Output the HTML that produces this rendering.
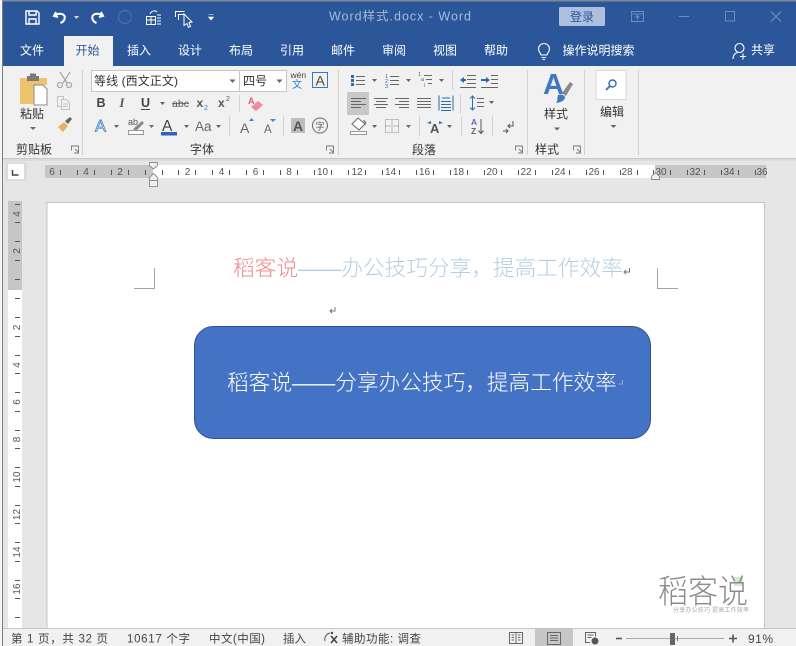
<!DOCTYPE html>
<html lang="zh">
<head>
<meta charset="utf-8">
<title>Word样式.docx - Word</title>
<style>
html,body{margin:0;padding:0;background:#e6e6e6;width:796px;height:646px;overflow:hidden}
svg{display:block;font-family:"Liberation Sans","Noto Sans CJK SC",sans-serif}
.t{font-size:12px;fill:#fff}
.r{font-size:12px;fill:#333}
.s{font-size:11.5px;fill:#444}
.n{font-size:10px;fill:#555}
.ic{fill:none;stroke:#555;stroke-width:1}
.w{fill:none;stroke:#fff;stroke-width:1.4}
.b{fill:#2b579a}
.ar{fill:#666}
.sep{stroke:#d2d2d2;stroke-width:1}
</style>
</head>
<body>
<svg width="796" height="646" viewBox="0 0 796 646" xmlns="http://www.w3.org/2000/svg">
<rect width="796" height="646" fill="#e6e6e6"/>
<!-- title + tab bar -->
<rect width="796" height="66" fill="#2b579a"/>
<rect width="796" height="1.5" fill="#7f8794"/>
<!-- QAT -->
<g class="w">
<path d="M26 11h11l2 2v11H26z"/><path d="M29 11v4h7v-4"/><path d="M29 24v-5h7v5"/>
<path d="M56 12l-2 4 4 1M54.500 16c3-3 8-3 10 0 1 3-1 6-4 7" stroke-width="2"/>
<path d="M101 12l2 4-4 1M102.500 16c-3-3-8-3-10 0-1 3 1 6 4 7" stroke-width="2"/>
</g>
<path d="M74 16h5l-2.500 3z" fill="#cdd7e6"/>
<circle cx="125" cy="17" r="6.500" fill="none" stroke="#4470ad" stroke-width="1.200"/>
<g fill="none" stroke="#fff" stroke-width="1">
<rect x="146.500" y="16.500" width="9" height="8"/><path d="M146.500 20h9M151 16.500v8M157 15h4M157 18h4M157 21h4M157 24h4M150 14c1-3 5-4 7-2"/>
<path d="M175.500 17v-5.500h9M178.500 20v-5.500h6"/>
</g>
<path d="M184 14l8 8-3 .5 1.500 4-2 .8-1.500-3.800-3 2z" fill="#2b579a" stroke="#fff" stroke-width="1"/>
<path d="M208.500 14.500h5M208.500 17h5l-2.500 3z" fill="#fff" stroke="#fff" stroke-width=".6"/>
<text x="329" y="20.500" font-size="12.500" fill="#a7bad7" textLength="142" lengthAdjust="spacing">Word样式.docx  -  Word</text>
<rect x="559" y="7" width="46" height="19" rx="1.500" fill="#adbfda"/>
<text x="570" y="21" font-size="12" fill="#2b579a">登录</text>
<g fill="none" stroke="#6d8dbb" stroke-width="1">
<path d="M631.500 11.500h12v10h-12zM631.500 14h12M637.500 20v-4M635.500 17.500l2-2 2 2"/>
<path d="M679 16.500h10"/>
<rect x="725.500" y="11.500" width="9" height="9.500"/>
<path d="M771 11.500l10 10M781 11.500l-10 10" stroke-width="1.200"/>
</g>
<!-- tabs -->
<rect x="64" y="36" width="49" height="30" fill="#f1f1f1"/>
<g class="t">
<text x="20" y="54.500">文件</text>
<text x="75.500" y="54.500" fill="#2b579a" style="fill:#2b579a">开始</text>
<text x="127" y="54.500">插入</text>
<text x="178" y="54.500">设计</text>
<text x="229" y="54.500">布局</text>
<text x="280" y="54.500">引用</text>
<text x="331" y="54.500">邮件</text>
<text x="382" y="54.500">审阅</text>
<text x="433" y="54.500">视图</text>
<text x="484" y="54.500">帮助</text>
<text x="562.500" y="54.500">操作说明搜索</text>
<text x="751" y="54">共享</text>
</g>
<g fill="none" stroke="#fff" stroke-width="1.100">
<path d="M541 55c0-2-2.500-3-2.500-6a5.500 5.500 0 0 1 11 0c0 3-2.500 4-2.500 6zM541.500 57.500h4.500M542.500 59.500h2.500"/>
<circle cx="739.500" cy="48" r="4.500"/><path d="M733 59c0-4 2.500-6.500 5-6.500M743 53.500v6M740 56.500h6"/>
</g>
<!-- ribbon -->
<rect y="66" width="796" height="92" fill="#f1f1f1"/>
<rect y="158" width="796" height="1" fill="#c8c8c8"/>
<rect y="159" width="796" height="2" fill="#dcdcdc"/>
<rect x="0" y="0" width="2" height="646" fill="#f5f5f5"/>
<rect x="2" y="0" width="1" height="646" fill="#7e7e7e"/>
<rect x="3" y="0" width="793" height="1.500" fill="#7f8794" opacity=".8"/>
<g class="sep">
<path d="M82.500 70v85M338.500 70v85M527.500 70v85M584.500 70v85M638.500 70v85"/>
<path d="M239.500 95v17M229.500 116v20M283.500 116v20M452.500 70v20M460.500 94v20M419.500 116v20M461.500 116v20M492.500 116v20"/>
</g>
<!-- clipboard -->
<path d="M20 78h27v7H40v19H20z" fill="#eec36d"/>
<path d="M27 76h12v5H27z" fill="#7a7a7a"/><path d="M30 73.500h6v3h-6z" fill="#7a7a7a"/>
<path d="M34 85h9l4 4v16H34z" fill="#fff" stroke="#8a8a8a"/>
<text x="20" y="118" class="r">粘贴</text>
<path d="M30 127h6l-3 3z" class="ar"/>
<g fill="none" stroke="#a9a9a9" stroke-width="1.300">
<path d="M60 72l7 11M70 72l-7 11"/><circle cx="60" cy="85" r="2.500"/><circle cx="69" cy="85" r="2.500"/>
</g>
<g fill="none" stroke="#c0c0c0"><path d="M57.500 96.500h6v3M57.500 96.500v10h3M61.500 99.500h5l3 3v7h-8zM63 104h5M63 106.500h5"/></g>
<path d="M58 127l6-5 4 4-5 6z" fill="#e5b45c"/><path d="M65 121l5-4 2 2-4 5z" fill="#666"/>
<text x="16" y="153.500" class="r">剪贴板</text>
<g fill="none" stroke="#777" stroke-width=".9">
<path d="M71.500 150.500v-4.500h7v7H74M75 149l3 3"/>
<path d="M326.500 150.500v-4.500h7v7H329M330 149l3 3"/>
<path d="M515.500 150.500v-4.500h7v7H518M519 149l3 3"/>
<path d="M573.500 150.500v-4.500h7v7H576M577 149l3 3"/>
</g>
<!-- font -->
<rect x="91.500" y="70.500" width="148" height="21" fill="#fff" stroke="#c6c6c6"/>
<rect x="239.500" y="70.500" width="47" height="21" fill="#fff" stroke="#c6c6c6"/>
<text x="94" y="85" class="r" textLength="84">等线 (西文正文)</text>
<text x="243" y="85" class="r">四号</text>
<path d="M229.500 79.500h6l-3 3.500zM276.500 79.500h6l-3 3.500z" class="ar"/>
<text x="290.500" y="78" font-size="8.500" fill="#444">wén</text>
<text x="292" y="88" font-size="10" fill="#2b7cd3">文</text>
<rect x="312.500" y="72.500" width="15" height="15" fill="none" stroke="#3b7bb5"/>
<text x="315.500" y="85.500" font-size="14" fill="#444">A</text>
<text x="96.500" y="107" font-size="12.500" font-weight="bold" fill="#444">B</text>
<text x="119.500" y="107" font-size="12.500" font-style="italic" font-weight="bold" fill="#555" font-family="Liberation Serif">I</text>
<text x="141" y="107" font-size="12.500" font-weight="bold" fill="#444">U</text>
<path d="M141 109.500h9" stroke="#444" stroke-width="1"/>
<path d="M160 102h5l-2.500 3z" class="ar"/>
<text x="172" y="107" font-size="10.500" fill="#555" textLength="17">abc</text>
<path d="M172 103.500h17" stroke="#555" stroke-width=".8"/>
<text x="196.500" y="107" font-size="12" font-weight="bold" fill="#555">x</text><text x="204" y="110" font-size="7" fill="#2b7cd3">2</text>
<text x="218" y="107" font-size="12" font-weight="bold" fill="#555">x</text><text x="226" y="101" font-size="7" fill="#555">2</text>
<text x="248" y="104" font-size="9" fill="#e05a7a" font-weight="bold">A</text>
<path d="M251 107l7-6 5 4-7 6z" fill="#f08a9c"/>
<text x="95" y="131.500" font-size="16.500" fill="#cfe2f6" stroke="#4a86c5" stroke-width=".8">A</text>
<path d="M114 125h5l-2.500 3zM149 125h5l-2.500 3zM184 125h5l-2.500 3zM216 125h5l-2.500 3z" class="ar"/>
<text x="128" y="125" font-size="9" fill="#555">ab</text>
<path d="M133 129l9-8 2 2-8 8z" fill="#8a8a8a"/>
<rect x="128.500" y="130.500" width="15" height="4" fill="#fff" stroke="#999"/>
<text x="162" y="131" font-size="15.500" fill="#444">A</text>
<rect x="161" y="132" width="16" height="3.500" fill="#2f63b8"/>
<text x="195" y="131" font-size="13.500" fill="#666">Aa</text>
<text x="240" y="133" font-size="14" fill="#666">A</text><path d="M249 121h5l-2.500-3z" fill="#4a86c5"/>
<text x="264" y="133" font-size="11.500" fill="#666">A</text><path d="M270 119h6l-3 3z" fill="#4a86c5"/>
<rect x="291" y="118" width="14" height="15" fill="#bdbdbd"/>
<text x="293" y="131" font-size="14" font-weight="bold" fill="#555">A</text>
<circle cx="320" cy="125.500" r="7.500" fill="none" stroke="#666"/>
<text x="315.500" y="129.500" font-size="9" fill="#555">字</text>
<text x="190" y="153.500" class="r">字体</text>
<!-- paragraph -->
<g fill="none" stroke="#666" stroke-width="1">
<path d="M356 76.500h9M356 80.500h9M356 84.500h9M390 76.500h9M390 80.500h9M390 84.500h9M424 75.500h8M426 79.500h6M428 83.500h4"/>
</g>
<g fill="#2b6cb0">
<rect x="351" y="75" width="3" height="3"/><rect x="351" y="79" width="3" height="3"/><rect x="351" y="83" width="3" height="3"/>
</g>
<g font-size="5.500" fill="#2b6cb0"><text x="385" y="78">1</text><text x="385" y="83">2</text><text x="385" y="88">3</text><text x="418" y="76">1</text><text x="421" y="81">a</text><text x="424" y="87">i</text></g>
<path d="M372 79h5l-2.500 3zM406 79h5l-2.500 3zM439 79h5l-2.500 3z" class="ar"/>
<g fill="none" stroke="#666"><path d="M467 75.500h9M467 79.500h9M467 83.500h9M460 87.500h16M491 75.500h7M491 79.500h7M491 83.500h7M481 87.500h17"/></g>
<path d="M460 80l4-3v2h2v2h-2v2zM490 80l-4-3v2h-5v2h5v2z" fill="#2b6cb0"/>
<rect x="347" y="92" width="22" height="23" fill="#c8c8c8"/>
<g fill="none" stroke="#666">
<path d="M351 98.500h15M351 101.500h10M351 104.500h15M351 107.500h10"/>
<path d="M374 98.500h14M376 101.500h10M374 104.500h14M376 107.500h10"/>
<path d="M395 98.500h14M399 101.500h10M395 104.500h14M399 107.500h10"/>
<path d="M417 98.500h14M417 101.500h14M417 104.500h14M417 107.500h14"/>
<path d="M439 95.500v15M453 95.500v15M441 101.500h10M441 104.500h10M441 107.500h10M441 110.500h10" stroke="#2b6cb0"/>
<path d="M477 98.500h7M477 102.500h7M477 106.500h7"/>
</g>
<path d="M442 98h8" stroke="#2b6cb0"/>
<path d="M472.500 96v14M470 98.500l2.500-2.500 2.500 2.500M470 107.500l2.500 2.500 2.500-2.500" fill="none" stroke="#2b6cb0"/>
<path d="M489 101h5l-2.500 3z" class="ar"/>
<path d="M352 124l6-6 7 6-6 6z" fill="#fff" stroke="#666"/><path d="M363 120c2 0 4 1 3 5l-1-.500z" fill="#888"/>
<rect x="350.500" y="131.500" width="16" height="3" fill="#fff" stroke="#999"/>
<path d="M372 125h5l-2.500 3zM406 125h5l-2.500 3zM447 125h5l-2.500 3z" class="ar"/>
<rect x="385.500" y="119.500" width="13" height="13" fill="none" stroke="#8a8a8a" stroke-dasharray="1 1"/>
<path d="M392 119.500v13M385.500 126h13" stroke="#8a8a8a" stroke-dasharray="1 1"/>
<text x="430" y="133" font-size="13" font-weight="bold" fill="#555">A</text>
<path d="M427 123l4-2v3zM443 123l-4-2v3z" fill="#2b6cb0"/>
<text x="471" y="125" font-size="8.500" fill="#7a5fc0" font-weight="bold">A</text>
<text x="471" y="134" font-size="8.500" fill="#666" font-weight="bold">Z</text>
<path d="M481 119v14M478.500 130.500l2.500 3 2.500-3" fill="none" stroke="#555"/>
<path d="M513 121v5h-5M510 124l-2 2 2 2M503 131h5M506 129l2 2-2 2" fill="none" stroke="#555"/>
<text x="412" y="154" class="r">段落</text>
<!-- styles -->
<text x="543" y="94" font-size="29" font-weight="bold" fill="#3f78bf">A</text>
<path d="M562 93l8-11 3 2-7 12z" fill="#8a8a8a"/><path d="M558 95c3-1 7 0 7 2.500s-4 5-9 5.500c2-2 1-5 2-8z" fill="#3f78bf"/>
<text x="544" y="118" class="r">样式</text>
<path d="M554 127.500h6l-3 3z" class="ar"/>
<text x="535" y="153.500" class="r">样式</text>
<!-- editing -->
<rect x="596" y="70.500" width="30" height="29" fill="#fff" stroke="#d8d8d8"/>
<circle cx="612.500" cy="83.500" r="3.500" fill="none" stroke="#2f6db5" stroke-width="1.400"/>
<path d="M610 86l-4 4" stroke="#2f6db5" stroke-width="1.800"/>
<text x="600" y="116" class="r">编辑</text>
<path d="M610.500 125h6l-3 3z" class="ar"/>
<!-- horizontal ruler -->
<rect x="5" y="162" width="22" height="19" fill="#dcdcdc"/>
<rect x="8" y="164" width="16" height="15" fill="#fff"/>
<path d="M12.500 170v5h6" fill="none" stroke="#444" stroke-width="1.500"/>
<rect x="45" y="165" width="721" height="13" fill="#c6c6c6"/>
<rect x="153" y="165" width="502" height="13" fill="#fff"/>
<path transform="translate(0 1)" stroke="#555" stroke-width="1" d="M60.500 169v5M77.500 169v5M94.500 169v5M111.500 169v5M128.500 169v5M145.500 169v5M162.500 169v5M178.500 169v5M195.500 169v5M212.500 169v5M229.500 169v5M246.500 169v5M263.500 169v5M280.500 169v5M297.500 169v5M314.500 169v5M331.500 169v5M348.500 169v5M365.500 169v5M382.500 169v5M399.500 169v5M416.500 169v5M433.500 169v5M450.500 169v5M467.500 169v5M484.500 169v5M501.500 169v5M518.500 169v5M535.500 169v5M552.500 169v5M569.500 169v5M586.500 169v5M603.500 169v5M620.500 169v5M637.500 169v5M653.500 169v5M670.500 169v5M687.500 169v5M704.500 169v5M721.500 169v5M738.500 169v5M755.500 169v5"/>
<g class="n" text-anchor="middle">
<text x="52" y="175">6</text><text x="86" y="175">4</text><text x="120" y="175">2</text>
<text x="187.500" y="175">2</text><text x="221.500" y="175">4</text><text x="255.500" y="175">6</text><text x="289" y="175">8</text>
<text x="322.500" y="175">10</text><text x="357" y="175">12</text><text x="390.500" y="175">14</text><text x="424.500" y="175">16</text><text x="458.500" y="175">18</text>
<text x="492" y="175">20</text><text x="526" y="175">22</text><text x="560" y="175">24</text><text x="594" y="175">26</text><text x="627" y="175">28</text>
<text x="661" y="175">30</text><text x="695" y="175">32</text><text x="729" y="175">34</text><text x="762" y="175">36</text>
</g>
<g fill="#f1f1f1" stroke="#8a8a8a" stroke-width=".9">
<path d="M149.500 162.500h8v3l-4 3.500-4-3.500z"/>
<path d="M153.500 173.500l4 4v3h-8v-3z"/>
<rect x="149.500" y="180.500" width="8" height="6"/>
<path d="M655.500 172.500l4 4v3h-8v-3z"/>
</g>
<!-- vertical ruler -->
<rect x="8" y="201" width="14" height="427" fill="#fff"/>
<rect x="8" y="201" width="14" height="89" fill="#c6c6c6"/>
<path transform="translate(2 0)" stroke="#555" stroke-width="1" d="M13 204.500h5M13 222.500h5M13 241.500h5M13 260.500h5M13 279.500h5M13 298.500h5M13 317.500h5M13 336.500h5M13 355.500h5M13 373.500h5M13 392.500h5M13 411.500h5M13 430.500h5M13 448.500h5M13 467.500h5M13 486.500h5M13 505.500h5M13 523.500h5M13 542.500h5M13 561.500h5M13 580.500h5M13 598.500h5M13 617.500h5"/>
<g class="n" text-anchor="middle">
<text transform="translate(20 214) rotate(-90)">4</text>
<text transform="translate(20 251) rotate(-90)">2</text>
<text transform="translate(20 327.500) rotate(-90)">2</text>
<text transform="translate(20 365) rotate(-90)">4</text>
<text transform="translate(20 402) rotate(-90)">6</text>
<text transform="translate(20 439.500) rotate(-90)">8</text>
<text transform="translate(20 477) rotate(-90)">10</text>
<text transform="translate(20 514.500) rotate(-90)">12</text>
<text transform="translate(20 552) rotate(-90)">14</text>
<text transform="translate(20 589) rotate(-90)">16</text>
</g>
<!-- page -->
<rect x="47" y="202.500" width="717.500" height="430" fill="#fff" stroke="#c6c6c6"/>
<path d="M154.500 268v20.500H134M657.500 268v20.500H678" fill="none" stroke="#a3a3a3"/>
<text x="233" y="275.500" font-size="21.670" font-weight="300" fill="#ef8a8f">稻客说</text>
<text x="298" y="275.500" font-size="21.670" font-weight="300" fill="#b4cde4">——办公技巧分享，提高工作效率</text>
<path d="M629.500 268v4h-5M626 270l-2 2 2 2" fill="none" stroke="#777"/>
<path d="M335 307v4h-5M332 309l-2 2 2 2" fill="none" stroke="#777"/>
<rect x="194.500" y="326.500" width="456" height="112" rx="19" fill="#4472c4" stroke="#2f528f"/>
<text x="227" y="390" font-size="21.670" font-weight="300" fill="#fff">稻客说——分享办公技巧，提高工作效率</text>
<path d="M622.500 380v4h-4" fill="none" stroke="#8ea9da"/>
<!-- watermark -->
<rect x="734" y="577" width="9" height="9" fill="#cdeecd"/>
<text x="658" y="603" font-size="33" font-weight="300" fill="#8b8b8b" textLength="90" lengthAdjust="spacingAndGlyphs">稻客说</text>
<text x="673" y="612" font-size="6" fill="#aaa" textLength="76">分享办公技巧 提高工作效率</text>
<!-- status bar -->
<rect y="628" width="796" height="18" fill="#f1f1f1"/>
<rect y="628" width="796" height="1" fill="#c6c6c6"/>
<rect x="0" y="628" width="2" height="18" fill="#f5f5f5"/>
<rect x="2" y="628" width="1" height="18" fill="#7e7e7e"/>
<g class="s">
<text x="11" y="642.500" textLength="97">第 1 页，共 32 页</text>
<text x="127" y="642.500" textLength="63">10617 个字</text>
<text x="209" y="642.500" textLength="56">中文(中国)</text>
<text x="283" y="642.500">插入</text>
<text x="342" y="642.500" textLength="79">辅助功能: 调查</text>
<text x="748" y="643" font-size="12" textLength="25">91%</text>
</g>
<path d="M330 633c-4 1-6 5-5 8" fill="none" stroke="#555"/>
<path d="M331 636l6 7M337 636l-6 7" stroke="#444" stroke-width="1.600"/>
<circle cx="332" cy="633" r="1.200" fill="#444"/>
<rect x="535" y="629" width="38" height="17" fill="#c6c6c6"/>
<g fill="none" stroke="#666">
<path d="M509.500 632.500h13v11h-13zM516 632.500v11M511.500 635h2.500M511.500 637.500h2.500M511.500 640h2.500M518 635h2.500M518 637.500h2.500M518 640h2.500"/>
<path d="M547.500 632.500h13v12h-13zM550 635.500h8M550 638h8M550 640.500h8"/>
<path d="M590 642.500h-4.500v-10h10v4M587.500 635h6M587.500 637.500h4"/>
</g>
<circle cx="595" cy="641" r="3.500" fill="#555"/>
<path d="M616 638.500h6" stroke="#555" stroke-width="1.600"/>
<path d="M626 638.500h98" stroke="#aaa"/>
<rect x="670" y="633" width="5" height="12" fill="#666"/>
<path d="M677.500 636v5" stroke="#777"/>
<path d="M729 638.500h8M733 634.500v8" stroke="#555" stroke-width="1.600"/>
</svg>
</body>
</html>
